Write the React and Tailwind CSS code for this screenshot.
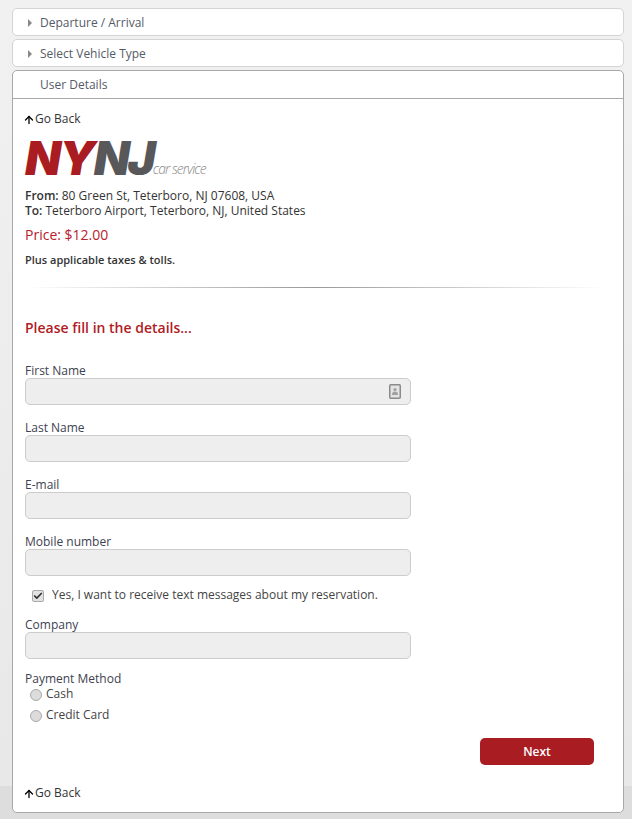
import React from "react";
import { ArrowUp, Check } from "lucide-react";

function Header({ title, arrow }) {
  return (
    <div className="h-[28px] pt-[2px] flex items-center bg-white border border-[#d4d4d4] rounded-[5px] text-[#555b66]">
      <div className="w-[27px] flex justify-end pr-[8px]">
        {arrow && <div className="w-0 h-0 border-y-[4px] border-y-transparent border-l-[4px] border-l-[#888]"></div>}
      </div>
      <span>{title}</span>
    </div>
  );
}

function GoBack() {
  return (
    <a className="flex items-center h-[18px] text-[#333]">
      <ArrowUp size={12} strokeWidth={2.6} className="text-black mt-[2px] -ml-[2px]" />
      Go Back
    </a>
  );
}

function Field({ label, icon, className }) {
  return (
    <div className={className}>
      <label className="block h-[16px] leading-[18px] text-[#3d4250]">{label}</label>
      <div className="w-[386px] h-[27px] bg-[#eeeeee] border border-[#cccccc] rounded-[5px] flex items-center justify-end pr-[9px]">
        {icon && (
          <svg width="12" height="15" viewBox="0 0 12 15">
            <rect x="0.75" y="0.75" width="10.5" height="13.5" rx="1" fill="#e4e4e4" stroke="#8a8a8a" strokeWidth="1.5" />
            <circle cx="6" cy="5.5" r="1.6" fill="#a0a0a0" />
            <path d="M3 11c0-2.4 1.2-3.4 3-3.4s3 1 3 3.4z" fill="#a0a0a0" />
          </svg>
        )}
      </div>
    </div>
  );
}

function Radio({ label, className }) {
  return (
    <div className={`flex items-center h-[18px] ${className}`}>
      <div className="w-[12px] h-[12px] ml-[5px] mt-[1px] rounded-full bg-[#dcdcdc] border border-[#aaaaaa]"></div>
      <span className="ml-[4px] text-[#444]">{label}</span>
    </div>
  );
}

export default function App() {
  return (
    <div className="h-[819px] overflow-hidden pl-[12px] pr-[8px] pt-[8px] bg-[linear-gradient(to_bottom,#f1f1f1,#e8e8e8_786px,#dddddd_786px)] text-[12px] font-['Open_Sans',sans-serif]">
      <Header title="Departure / Arrival" arrow />
      <div className="mt-[3px]">
        <Header title="Select Vehicle Type" arrow />
      </div>
      <div className="mt-[3px] h-[743px] bg-white border border-[#a8a8a8] rounded-[5px]">
        <div className="h-[28px] flex items-center pl-[27px] border-b border-[#a8a8a8] text-[#555b66]">User Details</div>
        <div className="pl-[12px] pr-[29px] pt-[11px]">
          <GoBack />

          {/* logo */}
          <div className="flex items-end h-[36px] mt-[12px] font-['Inter',sans-serif] italic select-none">
            <span className="text-[47px] leading-[36px] font-black tracking-[-2px] text-[#a81c22]">NY</span>
            <span className="text-[47px] leading-[36px] font-black tracking-[-2px] text-[#58585a]">NJ</span>
            <span className="text-[14px] leading-[14px] tracking-[-1px] text-[#8a8a8a] ml-[-1px] font-light font-['Open_Sans',sans-serif]">car service</span>
          </div>

          <div className="mt-[12px] leading-[15px] text-[#333]">
            <div><span className="font-semibold">From:</span> 80 Green St, Teterboro, NJ 07608, USA</div>
            <div><span className="font-semibold">To:</span> Teterboro Airport, Teterboro, NJ, United States</div>
          </div>
          <div className="mt-[7px] text-[14px] leading-[20px] text-[#b8202e]">Price: $12.00</div>
          <div className="mt-[5px] text-[11px] leading-[20px] font-semibold text-[#333]">Plus applicable taxes &amp; tolls.</div>

          <div className="mt-[17px] h-px bg-[linear-gradient(to_right,#ffffff,#999999_50%,#ffffff)] -mr-[12px]"></div>

          <h2 className="mt-[30px] h-[20px] leading-[20px] text-[14px] font-semibold text-[#b01c24]">Please fill in the details...</h2>

          <Field label="First Name" icon className="mt-[24px]" />
          <Field label="Last Name" className="mt-[14px]" />
          <Field label="E-mail" className="mt-[14px]" />
          <Field label="Mobile number" className="mt-[14px]" />

          <div className="flex items-center h-[18px] mt-[10px]">
            <div className="w-[12px] h-[12px] ml-[7px] mt-[2px] bg-[#e2e2e2] border border-[#aaaaaa] rounded-[2px] flex items-center justify-center">
              <Check size={10} strokeWidth={4} className="text-[#333]" />
            </div>
            <span className="ml-[8px] text-[#444]">Yes, I want to receive text messages about my reservation.</span>
          </div>

          <Field label="Company" className="mt-[12px]" />

          <div className="mt-[11px] h-[17px] leading-[17px] text-[#3d4250]">Payment Method</div>
          <Radio label="Cash" className="mt-[-2px]" />
          <Radio label="Credit Card" className="mt-[3px]" />

          <div className="flex justify-end mt-[14px]">
            <button className="w-[114px] h-[27px] bg-[#a81c22] rounded-[5px] text-white font-semibold text-[12px]">Next</button>
          </div>

          <div className="mt-[19px]">
            <GoBack />
          </div>
        </div>
      </div>
    </div>
  );
}
